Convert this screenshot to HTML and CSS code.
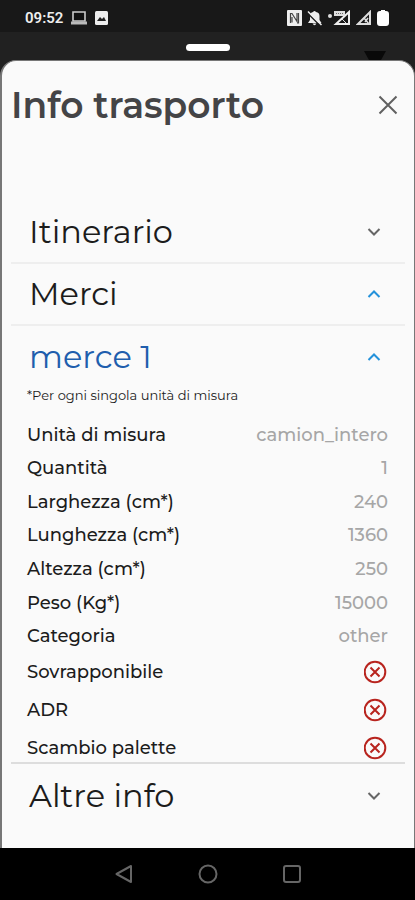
FILE: index.html
```html
<!DOCTYPE html>
<html lang="it">
<head>
<meta charset="utf-8">
<meta name="viewport" content="width=device-width, initial-scale=1">
<title>Info trasporto</title>
<link rel="stylesheet" href="styles.css">
</head>
<body>
<div class="status">
  <div class="status-group notifications">
    <time class="clock">09:52</time>
    <svg width="18" height="14" viewBox="0 0 18 14"><path d="M3 1h12v9H3z" fill="#111" stroke="#ccc" stroke-width="1.6"/><path d="M1 12h16" stroke="#bbb" stroke-width="3"/></svg>
    <svg width="13" height="14" viewBox="0 0 13 14"><rect width="13" height="14" rx="1.5" fill="#eee"/><path d="M2 10l3-4 2 2 2-2 2 4z" fill="#222"/></svg>
  </div>
  <div class="status-group">
    <svg width="15" height="16" viewBox="0 0 15 16"><rect width="15" height="16" rx="1" fill="#eee"/><path d="M3.5 13V3.500H5l5 8V3M5 12.500V7M11.500 3v10H10" fill="none" stroke="#444" stroke-width="1.200"/></svg>
    <svg width="16" height="16" viewBox="0 0 16 16"><path d="M1 13l2-3V6q0-3.500 3-4Q7.500 0 9 2q3.500.5 3.500 4v4l2 3zM5.500 13.500h4q-2 3.500-4 0" fill="#eee"/><path d="M1 3.500l12 12" stroke="#181818" stroke-width="1.500"/><path d="M1 1.500l13.500 13.500" stroke="#eee" stroke-width="1.500"/></svg>
    <svg width="23" height="16" viewBox="0 0 23 16"><circle cx="2" cy="6" r="2" fill="#ddd"/><path d="M8 14L21 2v12z" fill="none" stroke="#eee" stroke-width="2"/><path d="M6 1h11v5H6z" fill="#ddd"/><path d="M8 3.500h7" stroke="#666" stroke-dasharray="1 1"/><path d="M14 9l4 4" stroke="#ddd"/></svg>
    <svg width="16" height="16" viewBox="0 0 16 16"><path d="M2 14L14 2v12z" fill="none" stroke="#ddd" stroke-width="2"/><path d="M8 8l5 6M9 12l3-4" stroke="#ddd" stroke-width="1.500"/></svg>
    <svg width="12" height="16" viewBox="0 0 12 16"><path d="M3 1h1V0h4v1h1q3 0 3 3v9q0 3-3 3H3q-3 0-3-3V4q0-3 3-3" fill="#fff"/></svg>
  </div>
</div>
<div class="backdrop">
  <span class="handle"></span>
  <svg class="caret" width="22" height="9" viewBox="0 0 22 9"><path d="M0 0h22l-5 9H5z" fill="#090909"/></svg>
</div>
<main class="sheet">
  <header class="header">
    <h1>Info trasporto</h1>
    <button class="close" aria-label="Chiudi"><svg width="20" height="20" viewBox="0 0 20 20"><path d="M1.500 1.500l17 17M18.500 1.500l-17 17" stroke="#606060" stroke-width="2" fill="none"/></svg></button>
  </header>
  <button class="section" aria-expanded="false">Itinerario<svg width="14" height="8" viewBox="0 0 14 8"><path d="M1.500 1L7 6.500 12.500 1"/></svg></button>
  <button class="section open" aria-expanded="true">Merci<svg width="14" height="8" viewBox="0 0 14 8"><path d="M1.500 7L7 1.500 12.500 7"/></svg></button>
  <button class="section open item" aria-expanded="true">merce 1<svg width="14" height="8" viewBox="0 0 14 8"><path d="M1.500 7L7 1.500 12.500 7"/></svg></button>
  <div class="details">
    <p class="note">*Per ogni singola unità di misura</p>
    <dl class="values">
      <div><dt>Unità di misura</dt><dd>camion_intero</dd></div>
      <div><dt>Quantità</dt><dd>1</dd></div>
      <div><dt>Larghezza (cm*)</dt><dd>240</dd></div>
      <div><dt>Lunghezza (cm*)</dt><dd>1360</dd></div>
      <div><dt>Altezza (cm*)</dt><dd>250</dd></div>
      <div><dt>Peso (Kg*)</dt><dd>15000</dd></div>
      <div><dt>Categoria</dt><dd>other</dd></div>
    </dl>
    <dl class="flags">
      <div><dt>Sovrapponibile</dt><dd><svg width="24" height="24" viewBox="0 0 24 24" role="img" aria-label="No"><circle cx="11" cy="12" r="10.300"/><path d="M6.500 7.500l9 9M15.500 7.500l-9 9"/></svg></dd></div>
      <div><dt>ADR</dt><dd><svg width="24" height="24" viewBox="0 0 24 24" role="img" aria-label="No"><circle cx="11" cy="12" r="10.300"/><path d="M6.500 7.500l9 9M15.500 7.500l-9 9"/></svg></dd></div>
      <div><dt>Scambio palette</dt><dd><svg width="24" height="24" viewBox="0 0 24 24" role="img" aria-label="No"><circle cx="11" cy="12" r="10.300"/><path d="M6.500 7.500l9 9M15.500 7.500l-9 9"/></svg></dd></div>
    </dl>
  </div>
  <button class="section last" aria-expanded="false">Altre info<svg width="14" height="8" viewBox="0 0 14 8"><path d="M1.500 1L7 6.500 12.500 1"/></svg></button>
</main>
<nav class="navbar">
  <button aria-label="Indietro"><svg width="20" height="20" viewBox="0 0 20 20"><path d="M17 2v16L2.500 10z"/></svg></button>
  <button aria-label="Home"><svg width="20" height="20" viewBox="0 0 20 20"><circle cx="10" cy="10" r="8.500"/></svg></button>
  <button aria-label="Recenti"><svg width="20" height="20" viewBox="0 0 20 20"><rect x="2" y="2" width="16" height="16" rx="2"/></svg></button>
</nav>
</body>
</html>
```
FILE: styles.css
```css
* { box-sizing: border-box; }
body {
  margin: 0;
  min-height: 100vh;
  display: flex;
  flex-direction: column;
  background: #212121;
  font-family: Montserrat, Inter, sans-serif;
  color: #1c1c1c;
}
svg { display: block; flex: none; }
button {
  border: 0;
  padding: 0;
  background: none;
  font: inherit;
  color: inherit;
}
.status {
  display: flex;
  align-items: center;
  justify-content: space-between;
  height: 32px;
  padding: 4px 26px 0 25px;
  background: #181818;
}
.status-group {
  display: flex;
  align-items: center;
  gap: 5px;
}
.notifications { gap: 7px; }
.clock {
  font: 600 15px/20px Roboto, sans-serif;
  color: #eee;
}
.backdrop {
  position: relative;
  height: 28px;
  padding-top: 12px;
}
.handle {
  display: block;
  width: 44px;
  height: 7px;
  margin: 0 auto;
  border-radius: 4px;
  background: #fff;
}
.caret { position: absolute; right: 29px; bottom: 0; }
.sheet {
  flex: 1;
  padding: 0 9px;
  border: solid #777;
  border-width: 1px 1px 0 2px;
  border-radius: 16px 16px 0 0;
  background: #fafafa;
}
.header {
  display: flex;
  justify-content: space-between;
  align-items: center;
  height: 88px;
  margin-bottom: 53px;
  padding-right: 7px;
}
h1 {
  margin: 0;
  font-size: 36px;
  line-height: 48px;
  font-weight: 600;
  color: #444446;
}
.section {
  display: flex;
  width: 100%;
  height: 62px;
  align-items: center;
  justify-content: space-between;
  padding: 0 24px 0 18px;
  border-bottom: 2px solid #eee;
  font-size: 32px;
  line-height: 40px;
}
.section path { fill: none; stroke: #666; stroke-width: 2; }
.open path { stroke: #2492db; }
.item { height: 61px; color: #1f5ead; border-bottom: 0; }
.last { height: 64px; border-bottom: 0; }
.details {
  padding: 0 17px 2px 16px;
  border-bottom: 2px solid #ddd;
}
.note {
  margin: 0 0 15px;
  font-size: 13px;
  line-height: 16px;
}
dl { display: grid; margin: 0; }
dl div { display: flex; justify-content: space-between; align-items: center; }
dt { font-size: 18px; line-height: 24px; font-weight: 500; }
dd { margin: 0; font-size: 18px; line-height: 24px; font-weight: 500; color: #a6a6a6; }
.values { min-height: 235px; }
.flags { gap: 14px; padding-top: 7px; }
.flags circle, .flags path { fill: none; stroke: #b8241e; stroke-width: 2; }
.navbar {
  display: flex;
  justify-content: center;
  align-items: center;
  gap: 64px;
  height: 52px;
  background: #000;
}
.navbar svg { fill: none; stroke: #666; stroke-width: 2; stroke-linejoin: round; }
```
